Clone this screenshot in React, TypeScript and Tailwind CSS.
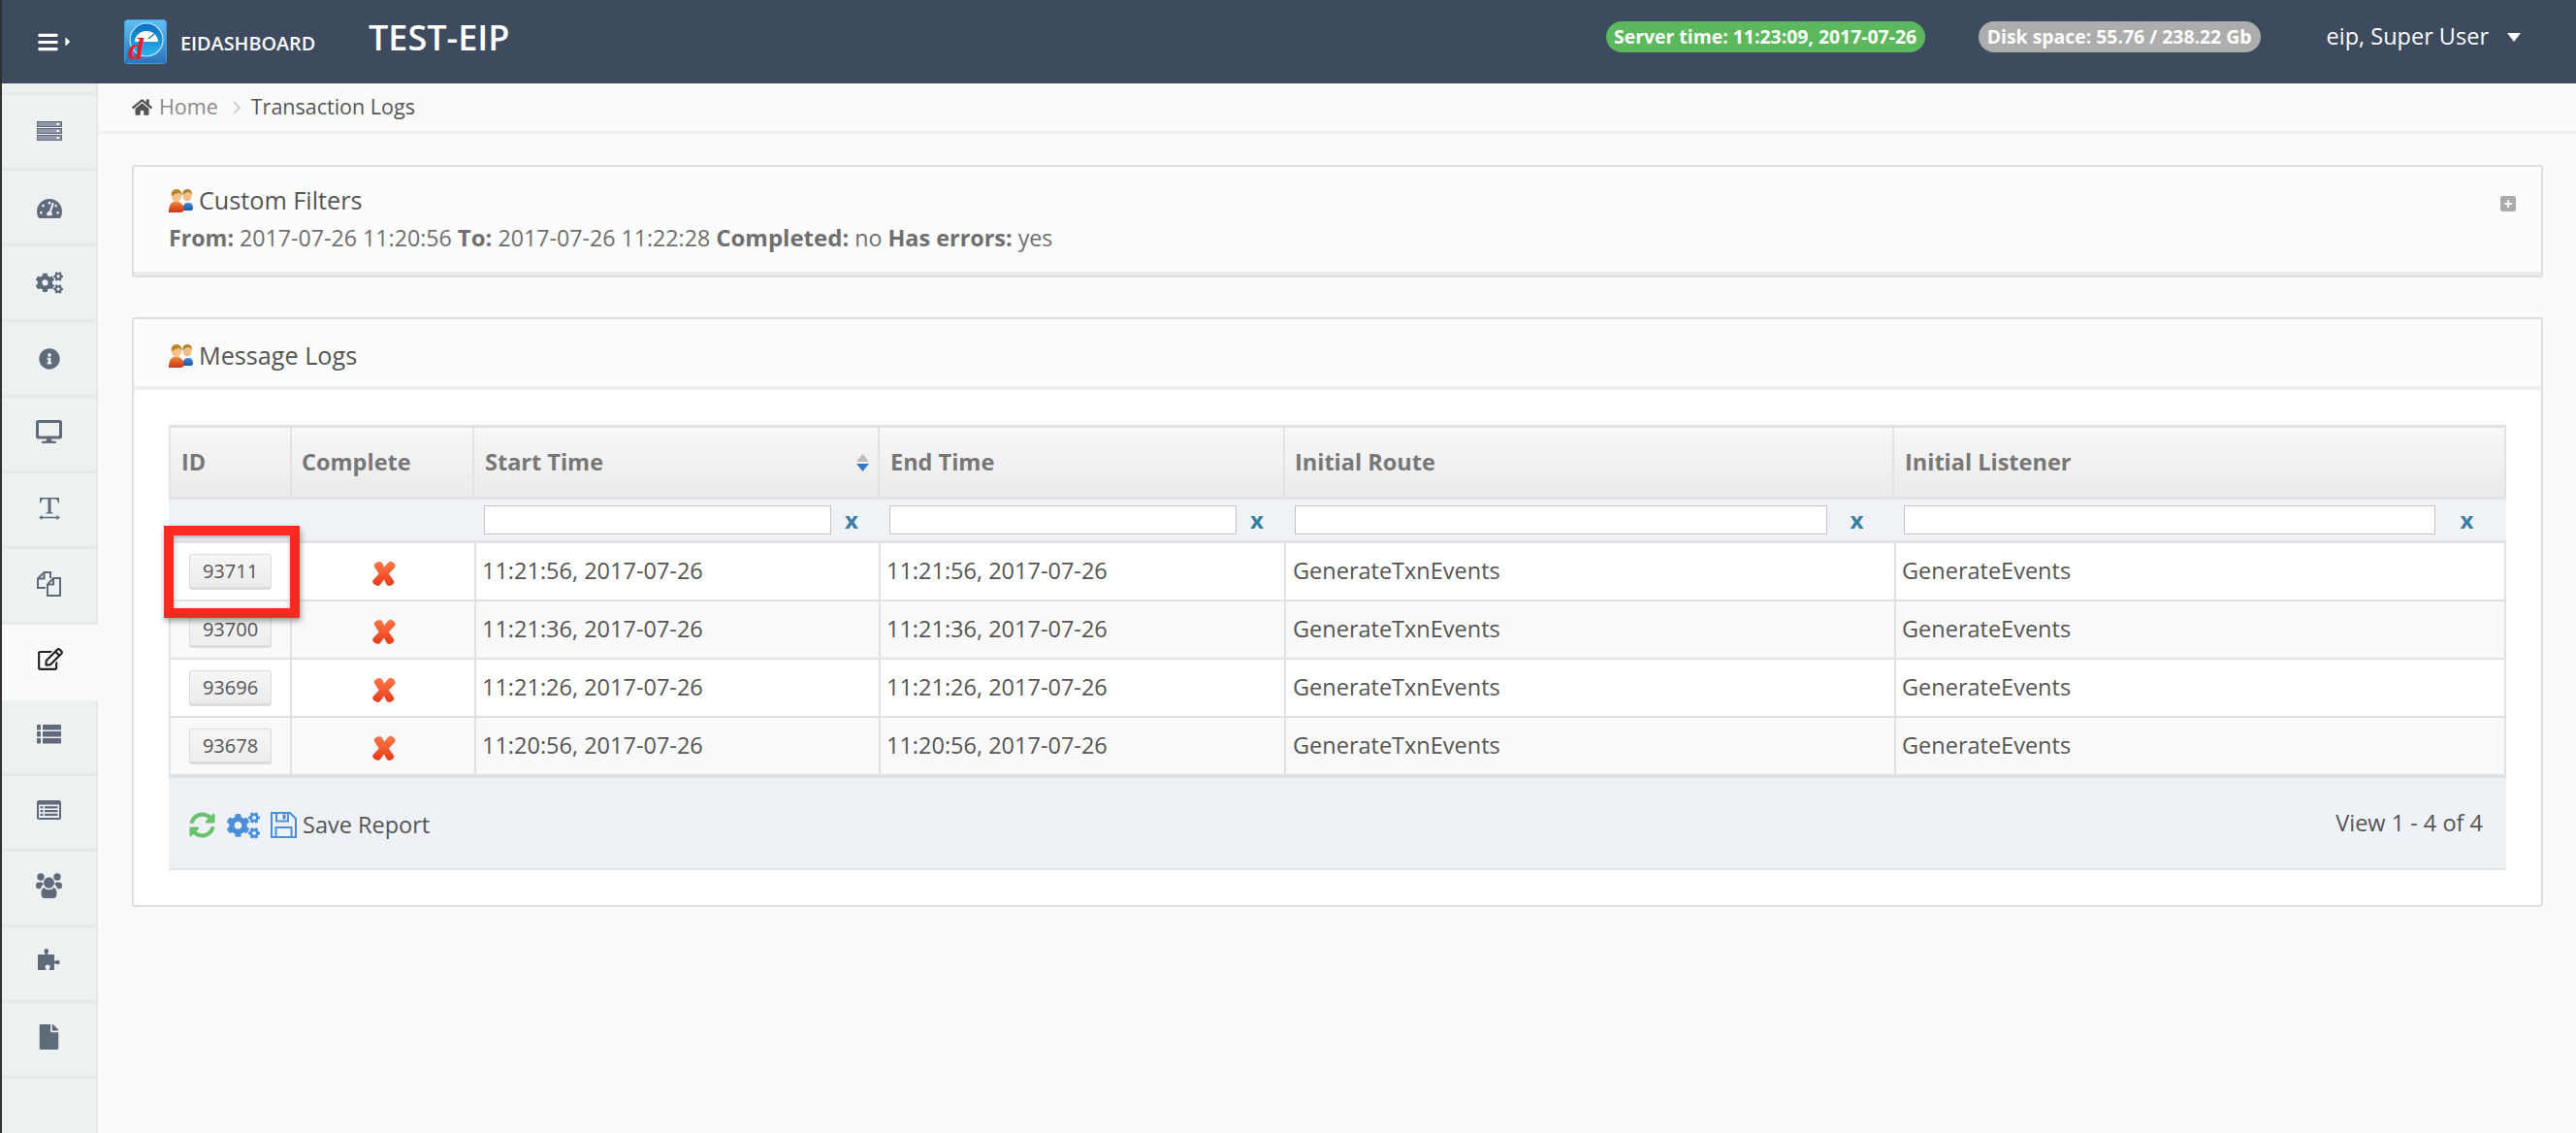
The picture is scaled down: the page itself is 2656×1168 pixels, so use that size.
import React from "react";
import { FaBars, FaTachometerAlt, FaCogs, FaInfoCircle, FaDesktop, FaRegEdit, FaFile, FaHome, FaSyncAlt, FaCaretRight } from "react-icons/fa";

type IconProps = { className?: string };

function ServerIcon({ className }: IconProps) {
  return (
    <svg viewBox="0 0 26 20" className={className}>
      {[0, 7, 14].map((y) => (
        <g key={y}>
          <rect x=".5" y={y + 0.5} width="25" height="5" fill="#8f98a4" stroke="#5f6b7a" />
          <rect x="20.500" y={y + 2} width="2.500" height="2" fill="#fff" />
        </g>
      ))}
    </svg>
  );
}

function TextWidthIcon({ className }: IconProps) {
  return (
    <svg viewBox="0 0 22 23" className={className} fill="#5f6b7a">
      <path d="M1 0h20v5.500h-1.200C19.500 3 19 1.500 16.500 1.500H12.500V14c0 1 .5 1.300 2 1.400V16.500h-7V15.400c1.500-.1 2-.4 2-1.400V1.500H5.500C3 1.500 2.500 3 2.200 5.500H1z" />
      <path d="M0 20.500l3.500-2.500v1.700h15V18l3.500 2.500-3.500 2.500v-1.700h-15V23z" />
    </svg>
  );
}

function FilesIcon({ className }: IconProps) {
  return (
    <svg viewBox="0 0 25 26" className={className} fill="none" stroke="#5f6b7a" strokeWidth="2">
      <path d="M9 17H1V7.500L7.500 1H14v6" />
      <path d="M7.500 1v6.500H1" />
      <path d="M11 25V13.500L17 7h7v18z" />
      <path d="M17 7v6.500h-6" />
    </svg>
  );
}

function ListIcon({ className }: IconProps) {
  return (
    <svg viewBox="0 0 25 20" className={className} fill="#5f6b7a">
      {[0, 7, 14].map((y) => (
        <g key={y}>
          <rect x="0" y={y} width="4" height="5.500" rx=".7" />
          <rect x="6" y={y} width="19" height="5.500" rx=".7" />
        </g>
      ))}
    </svg>
  );
}

function ListAltIcon({ className }: IconProps) {
  return (
    <svg viewBox="0 0 25 20" className={className}>
      <rect width="25" height="20" rx="2.500" fill="#5f6b7a" />
      <rect x="2" y="4.500" width="21" height="13.500" fill="#eef1f2" />
      {[6.2, 10, 13.8].map((y) => (
        <g key={y} fill="#5f6b7a">
          <rect x="3.500" y={y} width="3" height="2.200" />
          <rect x="8" y={y} width="13.500" height="2.200" />
        </g>
      ))}
    </svg>
  );
}

function UsersIcon({ className }: IconProps) {
  return (
    <svg viewBox="0 0 27 26" className={className} fill="#5f6b7a">
      <circle cx="5" cy="4" r="3.700" />
      <circle cx="22" cy="4" r="3.700" />
      <path d="M2 9.500c-1.500.5-2 2-2 4 0 1.800 1 2.800 3 2.800h1.800c.5-2 1.700-3.800 3.200-5-1 -1-2-2-3-2-1 .5-2 .6-3 .2z" />
      <path d="M25 9.500c1.500.5 2 2 2 4 0 1.800-1 2.800-3 2.800h-1.800c-.5-2-1.700-3.800-3.200-5 1-1 2-2 3-2 1 .5 2 .6 3 .2z" />
      <ellipse cx="13.500" cy="10" rx="5.500" ry="5.800" />
      <path d="M8.500 15c-2.300.8-3 3-3 6.500 0 3 1.500 4.500 4 4.500h8c2.500 0 4-1.500 4-4.500 0-3.500-.7-5.700-3-6.500-1.200 1.500-3 2.200-5 2.200s-3.800-.7-5-2.200z" />
    </svg>
  );
}

function PuzzleIcon({ className }: IconProps) {
  return (
    <svg viewBox="0 0 23 22" className={className} fill="#5f6b7a">
      <path d="M0 6h6.500c1 0 1.300-.7.700-1.500C6.500 3.500 6.500 2.800 6.500 2 6.500.8 7.500 0 8.800 0s2.300.8 2.300 2c0 .8-.2 1.500-.8 2.500-.5.800-.2 1.500.7 1.500h6v6c0 .8.700 1.100 1.400.5.700-.5 1.300-.8 2-.8 1.300 0 2.300 1 2.300 2.300s-1 2.300-2.300 2.300c-.7 0-1.300-.3-2-.8-.7-.6-1.400-.3-1.400.5V22h-4.500c-.8 0-1.100-.6-.6-1.300.5-.7.700-1.200.7-1.900 0-1.300-1-2.200-2.500-2.200s-2.500.9-2.500 2.200c0 .7.200 1.200.7 1.900.5.700.2 1.300-.6 1.300H0z" />
    </svg>
  );
}

function SaveIcon() {
  return (
    <svg viewBox="0 0 27 27" className="ml-[11px] w-[27px] h-[27px]" fill="none" stroke="#4a8fd8" strokeWidth="2">
      <path d="M1 1h19l6 6v19H1z" />
      <path d="M6 1.500v8h12v-8" />
      <rect x="12.500" y="2.500" width="3" height="5" fill="#4a8fd8" stroke="none" />
      <path d="M5.500 26v-10h16v10" />
    </svg>
  );
}

const sideTop: { Icon: React.ComponentType<IconProps>; cls: string; shift: string }[] = [
  { Icon: ServerIcon, cls: "w-[26px] h-[20px]", shift: "pb-[1px]" },
  { Icon: FaTachometerAlt, cls: "w-[26px] h-[24px]", shift: "pt-[3px]" },
  { Icon: FaCogs, cls: "w-[28px] h-[25px]", shift: "pb-0" },
  { Icon: FaInfoCircle, cls: "w-[22px] h-[22px]", shift: "pb-0" },
  { Icon: FaDesktop, cls: "w-[27px] h-[24px]", shift: "pb-[6px]" },
  { Icon: TextWidthIcon, cls: "w-[22px] h-[23px]", shift: "pb-[3px]" },
  { Icon: FilesIcon, cls: "w-[25px] h-[26px]", shift: "pb-[3px]" },
];
const sideBottom: { Icon: React.ComponentType<IconProps>; cls: string; shift: string }[] = [
  { Icon: ListIcon, cls: "w-[25px] h-[20px]", shift: "pb-[6px]" },
  { Icon: ListAltIcon, cls: "w-[25px] h-[20px]", shift: "pb-[6px]" },
  { Icon: UsersIcon, cls: "w-[27px] h-[26px]", shift: "pb-[5px]" },
  { Icon: PuzzleIcon, cls: "w-[23px] h-[22px]", shift: "pb-[9px]" },
  { Icon: FaFile, cls: "w-[21px] h-[26px]", shift: "pb-[5px]" },
];

const HEAD = "grid grid-cols-[127px_188px_418px_418px_628px_631px]";
const BODY = "grid grid-cols-[127px_190px_417px_418px_629px_629px]";

const rows = [
  ["93711", "11:21:56, 2017-07-26"],
  ["93700", "11:21:36, 2017-07-26"],
  ["93696", "11:21:26, 2017-07-26"],
  ["93678", "11:20:56, 2017-07-26"],
];

function People() {
  return (
    <svg viewBox="0 0 25 24" className="w-[25px] h-[24px] shrink-0">
      <defs>
        <linearGradient id="pr" x1="0" y1="0" x2="0" y2="1">
          <stop offset="0" stopColor="#f08a30" />
          <stop offset="1" stopColor="#c8321a" />
        </linearGradient>
        <linearGradient id="pb" x1="0" y1="0" x2="0" y2="1">
          <stop offset="0" stopColor="#3f8ad6" />
          <stop offset="1" stopColor="#1c56a8" />
        </linearGradient>
      </defs>
      <path d="M14 22c0-4 1-7 5-8h3c2 1 3 3 3 5.500 0 1.500-1 2.500-2 2.500z" fill="url(#pb)" />
      <ellipse cx="19" cy="6.500" rx="4.600" ry="6" fill="#f0bd84" />
      <path d="M14.300 6c-.4-4 2-6 5-6s5 2 4.600 6c-1-2-2-3-3.400-3-2 0-4 1-6.200 3z" fill="#b08030" />
      <path d="M0 24c-.3-6 2-10 5-11h5c3 1 6 4 5.500 9-1 2-3 2-5 2z" fill="url(#pr)" />
      <ellipse cx="8" cy="7" rx="5" ry="6.500" fill="#f3c08a" />
      <path d="M2.800 7C2 2 5 0 8 0s6 2 5.200 7c-1-2-2-3.200-3-3.500C8 5 5 5.500 2.800 7z" fill="#b88424" />
    </svg>
  );
}

function RedX() {
  return (
    <svg viewBox="0 0 26 26" className="w-[26px] h-[26px]">
      <defs>
        <linearGradient id="xg" x1="0" y1="0" x2="0" y2="1">
          <stop offset="0" stopColor="#ff7a45" />
          <stop offset="1" stopColor="#e8391a" />
        </linearGradient>
      </defs>
      <path
        d="M3.500 6.500C2.500 4.500 4 2.500 6 2l2.500-.5c1.500 0 2.500 1 3 2.500l1.500 3.500L17 2.500c1.500-1.500 3.500-1.500 5-.5l1.500 1.500c1 1 1 2.500.2 3.500L17.500 13.500l5 7c1 1.500.5 3-1 4l-2 1c-1.500.5-3 0-3.800-1.200L13 19l-4 5.500c-1 1.200-2.500 1.500-4 .7l-2.500-1.500c-1.300-1-1.500-2.500-.5-3.700L8 13.500z"
        fill="url(#xg)"
        stroke="#d8401f"
        strokeWidth=".5"
      />
    </svg>
  );
}

function Logo() {
  return (
    <svg viewBox="0 0 44 46" className="w-[44px] h-[46px] shrink-0 overflow-visible">
      <defs>
        <linearGradient id="lg" x1="0" y1="0" x2="0" y2="1">
          <stop offset="0" stopColor="#62c0f2" />
          <stop offset="1" stopColor="#2a74bd" />
        </linearGradient>
        <linearGradient id="ld" x1="0" y1="0" x2="0" y2="1">
          <stop offset="0" stopColor="#0a6fc0" />
          <stop offset="1" stopColor="#2cb4ee" />
        </linearGradient>
      </defs>
      <rect x=".5" y=".5" width="43" height="45" rx="3" fill="url(#lg)" stroke="#3aa0e0" />
      <circle cx="23" cy="21" r="17" fill="url(#ld)" stroke="#bfe4f8" strokeWidth="1.200" />
      <path d="M11 23a12 11 0 0 1 24 0z" fill="#fff" />
      <path d="M25 20l6-5" stroke="#0a6fc0" strokeWidth="1.200" />
      <text x="4" y="41" fontFamily="'Liberation Serif',serif" fontStyle="italic" fontWeight="700" fontSize="32" fill="#e0202f">d</text>
    </svg>
  );
}

function SortIcon() {
  return (
    <svg viewBox="0 0 13 18" className="w-[13px] h-[18px] ml-auto mr-[9px]">
      <path d="M6.500 0L13 8H0z" fill="#bdbdbd" />
      <path d="M0 10h13l-6.500 8z" fill="#337ac6" />
    </svg>
  );
}

function Filter({ w }: { w: string }) {
  return (
    <div className="flex items-center pl-[10px] pr-[8px] h-full">
      <input className={`${w} h-[30px] shrink-0 bg-white border border-[#c4c4c4] outline-none`} />
      <span className="flex-1 text-center font-bold text-[24px] leading-none text-[#3b7ea6]">x</span>
    </div>
  );
}

function SideItem({ Icon, cls, shift }: { Icon: React.ComponentType<IconProps>; cls: string; shift: string }) {
  return (
    <div className={`h-[78px] shrink-0 flex items-center justify-center border-b-[3px] border-[#e6e9e9] text-[#5f6b7a] ${shift}`}>
      <Icon className={cls} />
    </div>
  );
}

export default function App() {
  return (
    <div className="w-[2656px] h-[1168px] flex flex-col bg-[#fafafa] overflow-hidden border-l-2 border-[#333] font-['Open_Sans',sans-serif] text-[#555]">
      <header className="h-[86px] shrink-0 bg-[#3e4a5e] flex items-center text-white">
        <div className="flex items-center ml-[36px] w-[90px]">
          <FaBars className="w-[23px] h-[23px]" />
          <FaCaretRight className="w-[14px] h-[14px] ml-[2px]" />
        </div>
        <Logo />
        <span className="ml-[14px] w-[194px] mt-[4px] text-[19.8px] font-semibold whitespace-nowrap">EIDASHBOARD</span>
        <span className="text-[36px] font-semibold -mt-[8px] whitespace-nowrap">TEST-EIP</span>
        <div className="ml-auto flex items-center mr-[57px] -mt-[10px]">
          <span className="w-[329px] h-[32px] rounded-[16px] bg-[#5cb85c] flex items-center justify-center text-[19.4px] font-bold whitespace-nowrap">Server time: 11:23:09, 2017-07-26</span>
          <span className="ml-[55px] w-[291px] h-[32px] rounded-[16px] bg-[#adadad] flex items-center justify-center text-[19.4px] font-bold whitespace-nowrap">Disk space: 55.76 / 238.22 Gb</span>
          <span className="ml-[68px] text-[23.5px] whitespace-nowrap">eip, Super User</span>
          <svg viewBox="0 0 14 9" className="w-[14px] h-[9px] ml-[19px]"><path d="M0 0h14L7 9z" fill="#fff" /></svg>
        </div>
      </header>

      <div className="flex flex-1 min-h-0">
        <aside className="w-[99px] shrink-0 flex flex-col bg-[#eef1f2] border-r-2 border-[#e6e9e9]">
          <div className="h-[12px] shrink-0 border-b-[3px] border-[#e6e9e9]" />
          {sideTop.map((s, i) => <SideItem key={i} {...s} />)}
          <div className="h-[78px] shrink-0 -mr-[2px] pb-[8px] bg-[#fafafa] flex items-center justify-center text-[#222]">
            <FaRegEdit className="w-[26px] h-[23px]" />
          </div>
          {sideBottom.map((s, i) => <SideItem key={i} {...s} />)}
        </aside>

        <main className="flex-1 min-w-0 flex flex-col">
          <nav className="h-[52px] shrink-0 border-b-[3px] border-[#f0f0f0] flex items-center pl-[35px] text-[21.5px]">
            <FaHome className="w-[21px] h-[21px] text-[#555]" />
            <span className="ml-[7px] text-[#8a8a8a]">Home</span>
            <svg viewBox="0 0 8 14" className="w-[8px] h-[14px] ml-[15px] mr-[11px]" fill="none" stroke="#c4c4c4" strokeWidth="1.500"><path d="M1 1l6 6-6 6" /></svg>
            <span className="text-[#555]">Transaction Logs</span>
          </nav>

          <section className="mt-[32px] ml-[35px] mr-[34px] h-[116px] shrink-0 relative border-2 border-[#dedede] rounded-[3px] bg-[#fcfcfc] pl-[36px] pt-[21px]">
            <div className="flex items-center h-[28px]">
              <People />
              <span className="ml-[6px] text-[25.2px] text-[#555]">Custom Filters</span>
            </div>
            <div className="mt-[9px] text-[23.2px] leading-[30px] text-[#6f6f6f] whitespace-pre">
              <b>From:</b> 2017-07-26 11:20:56 <b className="text-[24px]">To:</b> 2017-07-26 11:22:28 <b className="text-[24px]">Completed:</b> no <b className="text-[23.4px]">Has errors:</b> yes
            </div>
            <div className="absolute left-0 right-0 bottom-0 h-[4px] bg-[#ececec]" />
            <div className="absolute right-[26px] top-[30px] w-[16px] h-[16px] rounded-[2px] bg-[#ababab] flex items-center justify-center text-white text-[16px] font-bold leading-none">+</div>
          </section>

          <section className="mt-[41px] ml-[35px] mr-[34px] h-[608px] shrink-0 border-2 border-[#dedede] rounded-[3px] bg-white">
            <div className="h-[73px] border-b-[4px] border-[#efefef] bg-[#fcfcfc] flex items-center pl-[36px] pt-[6px]">
              <People />
              <span className="ml-[6px] text-[25.2px] text-[#555]">Message Logs</span>
            </div>
            <div className="pt-[36px] pl-[36px] relative w-[2446px]">
              <div className={`${HEAD} h-[77px] bg-linear-to-b from-[#f7f7f7] to-[#ebebeb] border-t-[3px] border-b-[3px] border-[#e2e2e2] text-[23.5px] font-bold text-[#777]`}>
                <div className="border-l-2 border-r-2 border-[#e2e2e2] pl-[11px] flex items-center">ID</div>
                <div className="border-r-2 border-[#e2e2e2] pl-[10px] flex items-center">Complete</div>
                <div className="border-r-2 border-[#e2e2e2] pl-[11px] flex items-center">Start Time<SortIcon /></div>
                <div className="border-r-2 border-[#e2e2e2] pl-[11px] flex items-center">End Time</div>
                <div className="border-r-2 border-[#e2e2e2] pl-[10px] flex items-center">Initial Route</div>
                <div className="border-r-2 border-[#e2e2e2] pl-[11px] flex items-center">Initial Listener</div>
              </div>
              <div className={`${HEAD} h-[45px] bg-[#eff2f7] border-b-[3px] border-[#e2e2e2]`}>
                <div />
                <div />
                <Filter w="w-[358px]" />
                <Filter w="w-[358px]" />
                <Filter w="w-[549px]" />
                <Filter w="w-[548px]" />
              </div>
              {rows.map(([id, t], i) => (
                <div key={id} className={`${BODY} border-b-2 border-[#e2e2e2] text-[23.5px] ${i % 2 ? "bg-[#f9f9f9]" : "bg-white"} ${i === 3 ? "h-[62px] border-b-[4px]" : "h-[60px]"}`}>
                  <div className="border-l-2 border-r-2 border-[#e2e2e2] pl-[19px] pt-[11px]">
                    <button className="w-[85px] h-[37px] bg-linear-to-b from-[#f6f6f6] to-[#ececec] border border-[#dcdcdc] border-b-[3px] rounded-[3px] text-[20px] text-[#555] flex items-center justify-center">{id}</button>
                  </div>
                  <div className="border-r-2 border-[#e2e2e2] flex items-center justify-center pl-[1px] pt-[4px]"><RedX /></div>
                  <div className="border-r-2 border-[#e2e2e2] pl-[6px] flex items-center">{t}</div>
                  <div className="border-r-2 border-[#e2e2e2] pl-[6px] flex items-center">{t}</div>
                  <div className="border-r-2 border-[#e2e2e2] pl-[7px] flex items-center">GenerateTxnEvents</div>
                  <div className="border-r-2 border-[#e2e2e2] pl-[6px] flex items-center">GenerateEvents</div>
                </div>
              ))}
              <div className="h-[95px] bg-[#eef1f6] border-b-2 border-[#e2e2e2] flex items-center pl-[21px] pr-[24px] pt-[4px] w-[2410px]">
                <FaSyncAlt className="w-[27px] h-[27px] text-[#69c26e]" />
                <FaCogs className="ml-[12px] w-[34px] h-[30px] text-[#4a8fd8]" />
                <SaveIcon />
                <span className="ml-[6px] text-[23.5px] text-[#555]">Save Report</span>
                <span className="ml-auto text-[23.5px] text-[#555] -mt-[3px]">View 1 - 4 of 4</span>
              </div>
              <div className="absolute left-[31px] top-[140px] w-[140px] h-[95px] border-[10px] border-[#ff2a1f] shadow-[1px_3px_6px_rgba(0,0,0,0.4),inset_0_2px_4px_rgba(0,0,0,0.3)]" />
            </div>
          </section>
        </main>
      </div>
    </div>
  );
}
